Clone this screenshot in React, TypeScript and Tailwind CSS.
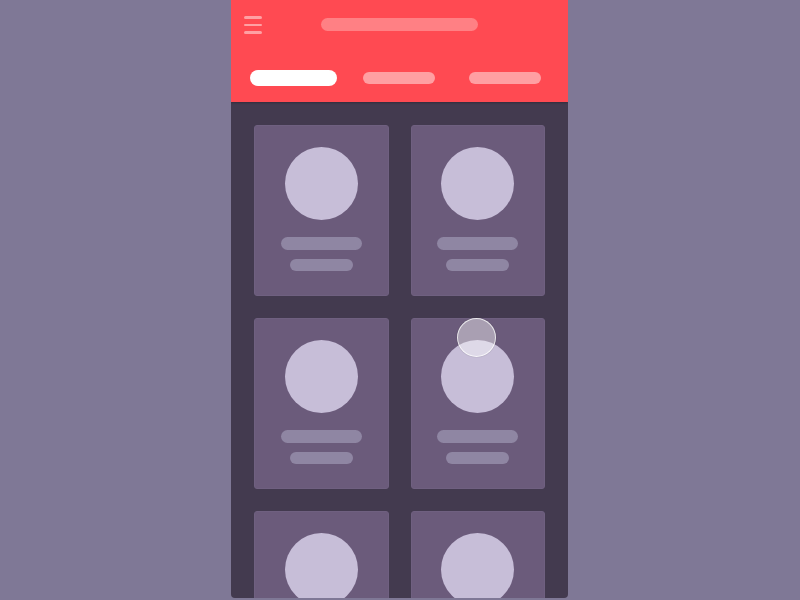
import React from "react";

function Card() {
  return (
    <div className="h-[171px] rounded-[3px] bg-[#6b5b7b] border border-[#6f6080] flex flex-col items-center pt-[21px]">
      <div className="w-[73px] h-[73px] rounded-full bg-[#c7bed8]" />
      <div className="mt-[17px] w-[81px] h-[13px] rounded-full bg-[#8f86a3]" />
      <div className="mt-[9px] w-[63px] h-[12px] rounded-full bg-[#8f86a3]" />
    </div>
  );
}

export default function App() {
  return (
    <div className="w-[800px] h-[600px] bg-[#7f7896] flex justify-center overflow-hidden">
      <div className="relative w-[337px] h-[598px] ml-[-1px] rounded-b-[4px] overflow-hidden bg-[#433a4f] flex flex-col">
        <div className="h-[102px] shrink-0 bg-[#ff4a52] shadow-[0_1px_2px_rgba(0,0,0,0.25)] relative z-10">
          <div className="relative h-[50px]">
            <div className="absolute left-[13px] top-[16px] flex flex-col gap-[5px]">
              <div className="w-[18px] h-[2.5px] rounded-full bg-[#ffa0a3]" />
              <div className="w-[18px] h-[2.5px] rounded-full bg-[#ffa0a3]" />
              <div className="w-[18px] h-[2.5px] rounded-full bg-[#ffa0a3]" />
            </div>
            <div className="absolute left-[90px] top-[18px] w-[157px] h-[13px] rounded-full bg-[#ff8084]" />
          </div>
          <div className="flex items-center pl-[19px] mt-[20px] h-[16px]">
            <div className="w-[87px] h-[16px] rounded-full bg-white" />
            <div className="ml-[26px] w-[72px] h-[12px] rounded-full bg-[#ff9fa2]" />
            <div className="ml-[34px] w-[72px] h-[12px] rounded-full bg-[#ff9fa2]" />
          </div>
        </div>
        <div className="grid grid-cols-2 gap-[22px] px-[23px] pt-[23px]">
          <Card />
          <Card />
          <Card />
          <Card />
          <Card />
          <Card />
        </div>
        <div className="absolute left-[226px] top-[318px] w-[39px] h-[39px] rounded-full bg-[rgba(255,255,255,0.42)] border-[1.5px] border-[rgba(255,255,255,0.75)] shadow-[0_0_1px_rgba(0,0,0,0.4)]" />
      </div>
    </div>
  );
}
